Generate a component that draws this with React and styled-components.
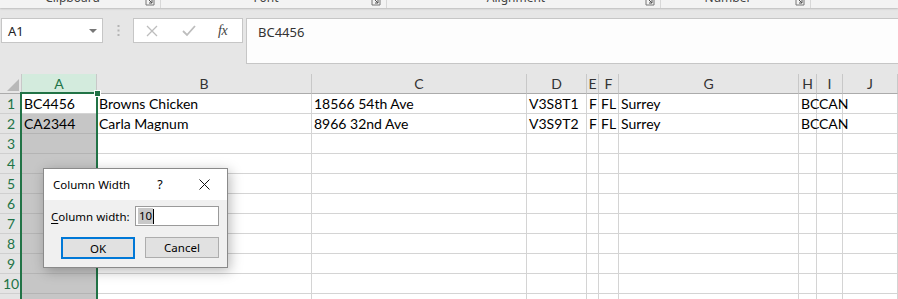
import React from "react";
import styled, { createGlobalStyle } from "styled-components";

const UI = `"Noto Sans", "Open Sans", sans-serif`;
const CELL = `Lato, "Noto Sans", sans-serif`;

const Global = createGlobalStyle`
  html, body { margin: 0; padding: 0; background: #fff; overflow: hidden; }
  #root { width: 898px; height: 299px; }
`;

const Page = styled.div`
  position: relative;
  width: 898px;
  height: 299px;
  overflow: hidden;
  background: #fff;
`;

/* ---------- ribbon (cut off at top) ---------- */
const Ribbon = styled.div`
  display: flex;
  height: 8px;
  background: #f3f3f3;
  overflow: hidden;
  position: relative;
  z-index: 1;
  box-shadow: 0 1px 2px rgba(0, 0, 0, 0.18);
`;
const RibbonGroup = styled.div`
  flex: none;
  width: ${(p) => p.$w}px;
  display: flex;
  align-items: flex-start;
  border-right: 1px solid #d8d8d8;
  box-sizing: border-box;
`;
const RibbonLabel = styled.div`
  flex: 1;
  text-align: center;
  margin-top: -9px;
  font: 12px/14px ${UI};
  color: #444;
`;
const Launcher = styled.svg`
  flex: none;
  margin: -4px 5px 0 0;
`;

/* ---------- formula bar ---------- */
const FormulaBar = styled.div`
  height: 66px;
  box-sizing: border-box;
  background: #e6e6e6;
  display: flex;
  align-items: flex-start;
  padding: 10px 0 0 1px;
`;
const NameBox = styled.div`
  flex: none;
  width: 102px;
  height: 25px;
  box-sizing: border-box;
  border: 1px solid #c6c6c6;
  background: #fff;
  display: flex;
  align-items: center;
  justify-content: space-between;
  padding: 0 5px 0 6px;
  font: 13px ${UI};
  color: #222;
`;
const DropArrow = styled.span`
  width: 0;
  height: 0;
  border-left: 4px solid transparent;
  border-right: 4px solid transparent;
  border-top: 4px solid #777;
`;
const Grip = styled.div`
  flex: none;
  width: 30px;
  height: 25px;
  display: flex;
  align-items: center;
  justify-content: center;
`;
const FnBox = styled.div`
  flex: none;
  width: 110px;
  height: 25px;
  box-sizing: border-box;
  border: 1px solid #c6c6c6;
  background: #fff;
  display: flex;
  align-items: center;
  padding-left: 12px;
`;
const FnIcon = styled.span`
  flex: none;
  width: ${(p) => p.$w || 36}px;
  display: flex;
  align-items: center;
`;
const Fx = styled.span`
  font: italic 14px "Liberation Serif", serif;
  color: #444;
  letter-spacing: -0.5px;
`;
const FormulaInput = styled.div`
  flex: 1;
  margin-left: 3px;
  height: 46px;
  box-sizing: border-box;
  border: 1px solid #c6c6c6;
  border-right: none;
  background: #fdfdfd;
  padding: 5px 11px;
  font: 13px/16px ${UI};
  color: #333;
`;

/* ---------- grid ---------- */
const Sheet = styled.div`
  position: relative;
`;
const Grid = styled.div`
  display: grid;
  grid-template-columns: 22px 75px 215px 215px 60px 12px 20px 180px 18px 26px 1fr;
  grid-auto-rows: 20px;
`;
const Corner = styled.div`
  background: #e6e6e6;
  border-right: 1px solid #c8c8c8;
  border-bottom: 1px solid #ababab;
  position: relative;
  &::after {
    content: "";
    position: absolute;
    right: 2px;
    bottom: 2px;
    width: 0;
    height: 0;
    border-left: 12px solid transparent;
    border-bottom: 12px solid #b8b8b8;
  }
`;
const ColHead = styled.div`
  background: ${(p) => (p.$sel ? "#d3ebdd" : "#e6e6e6")};
  color: ${(p) => (p.$sel ? "#217346" : "#333")};
  border-right: 1px solid #c8c8c8;
  border-bottom: 1px solid #ababab;
  font: 14px/19px ${CELL};
  text-align: center;
  overflow: hidden;
`;
const RowHead = styled.div`
  background: #e4e4e4;
  color: #217346;
  border-right: 1px solid #ababab;
  border-bottom: 1px solid #cfcfcf;
  font: 14px/19px ${CELL};
  text-align: center;
  padding-left: 1px;
`;
const Cell = styled.div`
  background: ${(p) => (p.$sel ? "#c6c6c6" : "transparent")};
  border-right: 1px solid ${(p) => (p.$sel ? "#b4b4b4" : "#d4d4d4")};
  border-bottom: 1px solid ${(p) => (p.$sel ? "#b4b4b4" : "#d4d4d4")};
  font: 14px/19px ${CELL};
  color: #000;
  padding-left: 2px;
  white-space: nowrap;
  overflow: visible;
`;
const SelectionFrame = styled.div`
  position: absolute;
  left: 20px;
  top: 18px;
  width: 78px;
  height: 300px;
  box-sizing: border-box;
  border: 2px solid #217346;
  pointer-events: none;
`;
const FillHandle = styled.div`
  position: absolute;
  right: -4px;
  top: -3px;
  width: 5px;
  height: 5px;
  background: #217346;
  outline: 1px solid #fff;
`;

/* ---------- dialog ---------- */
const Dialog = styled.div`
  position: absolute;
  left: 43px;
  top: 168px;
  width: 185px;
  height: 100px;
  box-sizing: border-box;
  border: 1px solid #8a8a8a;
  background: #f0f0f0;
  box-shadow: 2px 3px 12px rgba(0, 0, 0, 0.28);
  display: flex;
  flex-direction: column;
  font: 11.5px ${UI};
  color: #000;
  z-index: 5;
`;
const TitleBar = styled.div`
  height: 31px;
  flex: none;
  background: #fff;
  display: flex;
  align-items: center;
`;
const Title = styled.div`
  flex: 1;
  padding-left: 9px;
  font: 11.5px ${UI};
  white-space: nowrap;
`;
const TitleBtn = styled.div`
  width: ${(p) => p.$w}px;
  height: 31px;
  display: flex;
  align-items: center;
  justify-content: center;
  font: 12.5px ${UI};
  margin-left: ${(p) => p.$ml || 0}px;
`;
const Body = styled.div`
  flex: 1;
  padding: 6px 8px 8px 7px;
  display: flex;
  flex-direction: column;
  gap: 11px;
`;
const FieldRow = styled.div`
  display: flex;
  align-items: center;
  justify-content: space-between;
  height: 20px;
`;
const Label = styled.span`
  font: 11.5px ${UI};
  white-space: nowrap;
  u { text-decoration: underline; text-underline-offset: 2px; }
`;
const TextBox = styled.div`
  flex: none;
  width: 84px;
  height: 20px;
  box-sizing: border-box;
  border: 1px solid #9a9a9a;
  background: #fff;
  display: flex;
  align-items: center;
  padding-left: 2px;
  font: 11.5px/16px ${UI};
`;
const Highlight = styled.span`
  background: #c8c8c8;
  padding: 0 1px;
`;
const TextCaret = styled.span`
  width: 1px;
  height: 15px;
  background: #000;
`;
const ButtonRow = styled.div`
  display: flex;
  justify-content: flex-end;
  gap: 10px;
`;
const Button = styled.div`
  width: 74px;
  height: ${(p) => (p.$primary ? 22 : 21)}px;
  box-sizing: border-box;
  border: ${(p) => (p.$primary ? "2px solid #0078d7" : "1px solid #adadad")};
  background: #e1e1e1;
  display: flex;
  align-items: center;
  justify-content: center;
  font: 11.5px ${UI};
`;

const LauncherIcon = () => (
  <Launcher width="10" height="10" viewBox="0 0 10 10">
    <path d="M1 1 V9 H9 V1" fill="none" stroke="#777" strokeWidth="1" />
    <path d="M3 3 L7 7 M7 4 V7 H4" fill="none" stroke="#555" strokeWidth="1" />
  </Launcher>
);

const cols = ["A", "B", "C", "D", "E", "F", "G", "H", "I", "J"];
const data = [
  ["BC4456", "Browns Chicken", "18566 54th Ave", "V3S8T1", "F", "FL", "Surrey", "BC", "CAN", ""],
  ["CA2344", "Carla Magnum", "8966 32nd Ave", "V3S9T2", "F", "FL", "Surrey", "BC", "CAN", ""],
];

export default function App() {
  const rows = [];
  for (let r = 1; r <= 11; r++) {
    const vals = data[r - 1] || [];
    rows.push(<RowHead key={`h${r}`}>{r}</RowHead>);
    cols.forEach((c, i) => {
      rows.push(
        <Cell key={`${c}${r}`} $sel={i === 0 && r > 1}>
          {vals[i] || ""}
        </Cell>
      );
    });
  }

  return (
    <Page>
      <Global />
      <Ribbon>
        <RibbonGroup $w={161}>
          <RibbonLabel>Clipboard</RibbonLabel>
          <LauncherIcon />
        </RibbonGroup>
        <RibbonGroup $w={226}>
          <RibbonLabel>Font</RibbonLabel>
          <LauncherIcon />
        </RibbonGroup>
        <RibbonGroup $w={274}>
          <RibbonLabel>Alignment</RibbonLabel>
          <LauncherIcon />
        </RibbonGroup>
        <RibbonGroup $w={150}>
          <RibbonLabel>Number</RibbonLabel>
          <LauncherIcon />
        </RibbonGroup>
      </Ribbon>

      <FormulaBar>
        <NameBox>
          <span>A1</span>
          <DropArrow />
        </NameBox>
        <Grip>
          <svg width="3" height="11" viewBox="0 0 3 11">
            <rect x="0.5" y="0" width="2" height="2" fill="#b4b4b4" />
            <rect x="0.5" y="4.5" width="2" height="2" fill="#b4b4b4" />
            <rect x="0.5" y="9" width="2" height="2" fill="#b4b4b4" />
          </svg>
        </Grip>
        <FnBox>
          <FnIcon>
            <svg width="12" height="12" viewBox="0 0 12 12">
              <path d="M1 1 L11 11 M11 1 L1 11" stroke="#bdbdbd" strokeWidth="1.3" fill="none" />
            </svg>
          </FnIcon>
          <FnIcon>
            <svg width="14" height="12" viewBox="0 0 14 12">
              <path d="M1 6 L5 10 L13 1" stroke="#bdbdbd" strokeWidth="1.8" fill="none" />
            </svg>
          </FnIcon>
          <FnIcon $w={20}>
            <Fx>fx</Fx>
          </FnIcon>
        </FnBox>
        <FormulaInput>BC4456</FormulaInput>
      </FormulaBar>

      <Sheet>
        <Grid>
          <Corner />
          {cols.map((c) => (
            <ColHead key={c} $sel={c === "A"}>
              {c}
            </ColHead>
          ))}
          {rows}
        </Grid>
        <SelectionFrame>
          <FillHandle />
        </SelectionFrame>
      </Sheet>

      <Dialog>
        <TitleBar>
          <Title>Column Width</Title>
          <TitleBtn $w={30}>?</TitleBtn>
          <TitleBtn $w={46} $ml={6}>
            <svg width="11" height="11" viewBox="0 0 11 11">
              <path d="M0.5 0.5 L10.5 10.5 M10.5 0.5 L0.5 10.5" stroke="#111" strokeWidth="1" fill="none" />
            </svg>
          </TitleBtn>
        </TitleBar>
        <Body>
          <FieldRow>
            <Label>
              <u>C</u>olumn width:
            </Label>
            <TextBox>
              <Highlight>10</Highlight>
              <TextCaret />
            </TextBox>
          </FieldRow>
          <ButtonRow>
            <Button $primary>OK</Button>
            <Button>Cancel</Button>
          </ButtonRow>
        </Body>
      </Dialog>
    </Page>
  );
}
